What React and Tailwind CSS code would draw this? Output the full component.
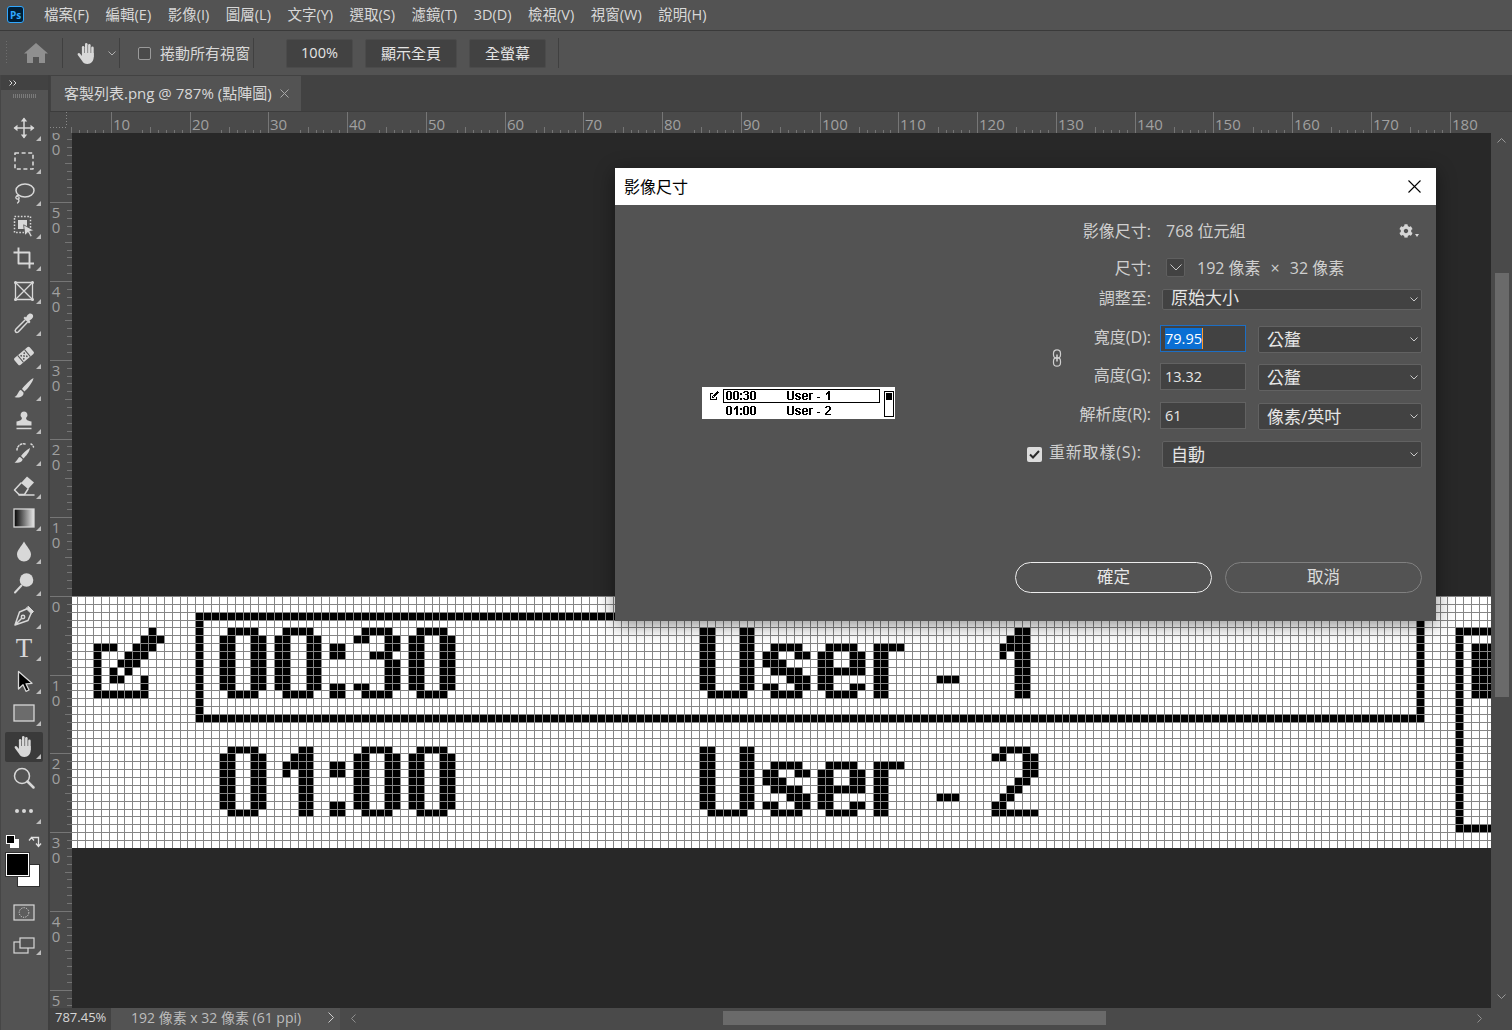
import React from "react";
import { FaCog } from "react-icons/fa";

const S = 7.8745;
const X0 = 30.0;

const ZERO = [".####.", "##..##", "##..##", "##..##", "##..##", "##..##", "##..##", "##..##", ".####."];
const THREE = [".####.", "##..##", "....##", "..###.", "....##", "....##", "....##", "##..##", ".####."];
const ONE = ["..##", ".###", "####", "#.##", "..##", "..##", "..##", "..##", "..##"];
const TWO = [".####.", "##..##", "....##", "....##", "...##.", "..##..", ".##...", "##....", "######"];
const COLON = ["..", "..", "##", "##", "..", "..", "..", "##", "##"];
const U = ["##...##", "##...##", "##...##", "##...##", "##...##", "##...##", "##...##", "##...##", ".#####."];
const LS = ["......", "......", ".####.", "##..##", "###...", ".####.", "...###", "##..##", ".####."];
const LE = ["......", "......", ".####.", "##..##", "##..##", "######", "##....", "##..##", ".####."];
const LR = ["....", "....", "####", "##..", "##..", "##..", "##..", "##..", "##.."];
const DASH = ["...", "...", "...", "...", "...", "...", "###", "...", "..."];
const CHECK = [
  ".......#..",
  "......###.",
  "###..###..",
  "#...###...",
  "#..###....",
  "#.#.#.....",
  "#.##..#...",
  "#.....#...",
  "#######...",
];

function buildPixels() {
  const out = [];
  const put = (glyph, col, row) =>
    glyph.forEach((line, r) => {
      let start = -1;
      for (let c = 0; c <= line.length; c++) {
        const on = line[c] === "#";
        if (on && start < 0) start = c;
        if (!on && start >= 0) {
          out.push({ c: col + start, r: row + r, w: c - start, h: 1 });
          start = -1;
        }
      }
    });
  put(CHECK, 8, 4);
  [[ZERO, 24], [ZERO, 31], [COLON, 38], [THREE, 41], [ZERO, 48]].forEach(([g, c]) => put(g, c, 4));
  [[ZERO, 24], [ONE, 32], [COLON, 38], [ZERO, 41], [ZERO, 48]].forEach(([g, c]) => put(g, c, 19));
  [4, 19].forEach((row) => {
    [[U, 85], [LS, 93], [LE, 100], [LR, 107], [DASH, 115]].forEach(([g, c]) => put(g, c, row));
  });
  put(ONE, 123, 4);
  put(TWO, 122, 19);
  out.push({ c: 21, r: 2, w: 156, h: 1 }, { c: 21, r: 15, w: 156, h: 1 }, { c: 21, r: 2, w: 1, h: 14 }, { c: 176, r: 2, w: 1, h: 14 });
  out.push({ c: 181, r: 4, w: 10, h: 1 }, { c: 181, r: 29, w: 10, h: 1 }, { c: 181, r: 4, w: 1, h: 26 }, { c: 190, r: 4, w: 1, h: 26 });
  out.push({ c: 183, r: 6, w: 6, h: 7 });
  return out;
}
const PIXELS = buildPixels();

function PixelCanvas() {
  const px = (c) => Math.round(X0 + c * S) - 72;
  const py = (r) => Math.round(r * S);
  const cols = Array.from({ length: 190 }, (_, i) => i);
  const rows = Array.from({ length: 33 }, (_, i) => i);
  return (
    <svg width="1419" height="252" shapeRendering="crispEdges" className="block bg-white">
      {PIXELS.map((p, i) => (
        <rect key={i} x={px(p.c)} y={py(p.r)} width={px(p.c + p.w) - px(p.c) + 1} height={py(p.r + p.h) - py(p.r) + 1} fill="#000" />
      ))}
      {cols.map((c) => (
        <rect key={c} x={px(c)} y="0" width="1" height="252" fill="#858585" />
      ))}
      {rows.map((r) => (
        <rect key={r} x="0" y={py(r)} width="1419" height="1" fill="#858585" />
      ))}
    </svg>
  );
}

function Thumb() {
  const sx = (c) => (c >= 120 ? c + 1 : c);
  return (
    <svg width="193" height="32" viewBox="0 0 193 32" shapeRendering="crispEdges" className="block bg-white">
      {PIXELS.map((p, i) => (
        <rect key={i} x={sx(p.c)} y={p.r} width={sx(p.c + p.w) - sx(p.c)} height={p.h} fill="#000" />
      ))}
    </svg>
  );
}

function TopRuler() {
  const o = 32.1 - 50;
  const majors = Array.from({ length: 18 }, (_, i) => (i + 1) * 10);
  const minors = [];
  for (let u = 5; u <= 184; u++) {
    if (u % 10 === 0) continue;
    const m = u % 10;
    if (m >= 1 && m <= (u >= 100 ? 4 : 3)) continue;
    minors.push(u);
  }
  return (
    <svg width="1441" height="21" className="block shrink-0">
      <path d="M16.5 0V15M0 15.5H16" stroke="#8a8a8a" strokeDasharray="1 2" shapeRendering="crispEdges" />
      {minors.map((u) => (
        <rect key={u} x={Math.round(o + u * S)} y={u % 5 === 0 ? 15 : 18} width="1" height={u % 5 === 0 ? 6 : 3} fill="#747474" shapeRendering="crispEdges" />
      ))}
      {majors.map((u) => (
        <g key={u}>
          <rect x={Math.round(o + u * S)} y="0" width="1" height="21" fill="#767676" shapeRendering="crispEdges" />
          <text x={Math.round(o + u * S) + 2} y="18" fontSize="15" fill="#a0a0a0">
            {u}
          </text>
        </g>
      ))}
    </svg>
  );
}

function LeftRuler() {
  const o = 463;
  const majors = [-6, -5, -4, -3, -2, -1, 0, 1, 2, 3, 4, 5];
  const units = Array.from({ length: 120 }, (_, i) => i - 60);
  return (
    <svg width="22" height="875" className="block shrink-0">
      {units.map((u) => (
        <rect key={u} x={u % 5 === 0 ? 15 : 17} y={Math.round(o + u * S)} width={u % 5 === 0 ? 7 : 5} height="1" fill="#747474" shapeRendering="crispEdges" />
      ))}
      {majors.map((k) => {
        const y = Math.round(o + k * 10 * S);
        const digits = String(Math.abs(k * 10)).split("");
        return (
          <g key={k}>
            <rect x="0" y={y} width="22" height="1" fill="#767676" shapeRendering="crispEdges" />
            {digits.map((d, i) => {
              const by = y + 16 + i * 15;
              if (by > 885) return null;
              return (
                <text key={i} x="6" y={by} fontSize="15" textAnchor="middle" fill="#a0a0a0">
                  {d}
                </text>
              );
            })}
          </g>
        );
      })}
    </svg>
  );
}

const C = "#d8d8d8";
const Ico = ({ children, size = 24 }) => (
  <svg width={size} height={size} viewBox="0 0 24 24" fill="none" stroke={C} strokeWidth="1.5" strokeLinecap="round" strokeLinejoin="round">
    {children}
  </svg>
);

const Hand = ({ size = 24, color = C }) => (
  <svg width={size} height={size} viewBox="0 0 24 24" fill={color}>
    <rect x="6.9" y="5" width="2.5" height="11" rx="1.25" />
    <rect x="10" y="2" width="2.5" height="13" rx="1.25" />
    <rect x="13.1" y="3" width="2.5" height="12" rx="1.25" />
    <rect x="16.2" y="5.5" width="2.5" height="11" rx="1.25" />
    <path d="M7 12h11.7v4c0 4-2.5 7-6.2 7-2.8 0-4.2-1.2-5.5-3.3L2.8 14c-.8-1.5 1.2-2.6 2.3-1.3L7 15z" />
  </svg>
);

const TOOLS = [
  <Ico><path d="M12 3v18M3 12h18" /><path d="M12 1.5l3.2 4H8.800zM12 22.500l3.200-4H8.800zM1.500 12l4-3.200v6.400zM22.500 12l-4-3.200v6.400z" fill={C} stroke="none" /></Ico>,
  <Ico><rect x="3" y="4" width="18" height="16" strokeDasharray="4 2.600" strokeLinecap="butt" strokeWidth="1.600" /></Ico>,
  <Ico><ellipse cx="13" cy="9.500" rx="9" ry="6.500" /><path d="M6.500 14.500c-3 .2-3.500 3-1.300 3.500 2.300.5 2.800-1.800.5-2.500M6.500 18c.8 1.500.5 3-1 4" strokeWidth="1.300" /></Ico>,
  <Ico><rect x="2.500" y="2.500" width="16" height="16" strokeDasharray="1.600 1.600" strokeLinecap="butt" /><rect x="6" y="6" width="9" height="9" fill={C} stroke="none" /><path d="M12 11l10 5.500-4.200 1 2.500 4.500-1.800 1-2.500-4.500-3 2.800z" fill={C} stroke="#535353" strokeWidth=".8" /></Ico>,
  <Ico><path d="M6.500 1.500V17.500H22M1.500 6.500h16v16" strokeWidth="1.900" strokeLinecap="butt" /></Ico>,
  <Ico><rect x="3.500" y="3.500" width="17" height="17" strokeWidth="1.300" /><path d="M3.500 3.500l17 17M20.500 3.500l-17 17" strokeWidth="1.300" /><g fill={C} stroke="none"><circle cx="3.500" cy="3.500" r="1.500" /><circle cx="20.500" cy="3.500" r="1.500" /><circle cx="3.500" cy="20.500" r="1.500" /><circle cx="20.500" cy="20.500" r="1.500" /></g></Ico>,
  <Ico><path d="M14 6.500l1.500-2.500c1.500-2 3.500-2 4.800-.8 1.300 1.300 1.200 3.200-.6 4.800l-2.200 1.500 1 1.500-1.500 1.500-5.500-5.500 1.500-1.500z" fill={C} stroke="none" /><path d="M13 9l-9 9c-2 2 0 4.500 2.200 3l9-9.500" /></Ico>,
  <Ico><g transform="rotate(-40 12 12)"><rect x="2" y="7.500" width="20" height="9" rx="1.500" fill={C} stroke="none" /><g fill="#535353" stroke="none"><rect x="7" y="7.500" width="1" height="9" /><rect x="16" y="7.500" width="1" height="9" /><circle cx="10" cy="10" r=".9" /><circle cx="14" cy="10" r=".9" /><circle cx="10" cy="14" r=".9" /><circle cx="14" cy="14" r=".9" /><circle cx="12" cy="12" r=".9" /></g></g></Ico>,
  <Ico><path d="M21.500 2c-3 1.500-9 7.500-11.500 11l2.500 2.500C15.500 13 21 6 21.500 2zM9 14c-3 .5-2.500 5-6.500 7 4 1.500 9.500 0 9-4.500z" fill={C} stroke="none" /></Ico>,
  <Ico><path d="M12 2.500a3.500 3.500 0 0 1 2.200 6.200c-.4 1.800 1 3 5.300 3.800v4h-15v-4c4.300-.8 5.700-2 5.300-3.800A3.500 3.500 0 0 1 12 2.500z" fill={C} stroke="none" /><path d="M4.500 19.500h15" strokeLinecap="butt" /></Ico>,
  <Ico><path d="M18 7C15 8.500 11 12 9 15l2.500 2.500C14 15 17.500 11 18 7zM8 16c-2.500.5-2 3.500-5.500 5.500 3.500 1 8.500-.5 8-3.500z" fill={C} stroke="none" /><path d="M5 9C5 5 9 2 13 3M19 3c1 .5 2 1.500 2.500 3" strokeDasharray="1.500 1.800" /></Ico>,
  <Ico><path d="M15 2.500l7 6-6 6.500-7-6z" fill={C} stroke="none" /><path d="M9 9l-6.500 7 4.500 4.500h5.500L16 15" /><path d="M7 21h15" /></Ico>,
  <svg width="22" height="20" viewBox="0 0 22 20"><defs><linearGradient id="grad" x1="0" x2="1" y1="0" y2="0"><stop offset="0" stopColor="#000" /><stop offset="1" stopColor="#e8e8e8" /></linearGradient></defs><rect x="1" y="1" width="20" height="18" fill="url(#grad)" stroke={C} strokeWidth="1.300" /></svg>,
  <Ico><path d="M12 2.500c2.500 5 7 8.500 7 13a7 7 0 0 1-14 0c0-4.500 4.500-8 7-13z" fill={C} stroke="none" /></Ico>,
  <Ico><circle cx="14.500" cy="9" r="6.800" fill={C} stroke="none" /><path d="M9.500 14.500l-6.500 7" strokeWidth="2" /></Ico>,
  <Ico><path d="M16.500 2.500l5 5-2.200 2.200-5-5z" fill={C} stroke={C} strokeWidth="1" /><path d="M14.500 5L7.500 8 3 21l13-4.500 3-7M3 21l6.500-6.500" /><circle cx="11" cy="13" r="1.700" /></Ico>,
  <span className="font-['Liberation_Serif',serif] text-[27px] leading-none text-[#d8d8d8]">T</span>,
  <Ico><path d="M6.500 2.500v17.500l4.500-4.200 3 6.500 3-1.300-3-6.200 6-.5z" fill="#000" stroke={C} strokeWidth="1.300" /></Ico>,
  <svg width="22" height="18" viewBox="0 0 22 18"><rect x="1" y="1" width="20" height="16" fill="#6c6c6c" stroke={C} strokeWidth="1.300" /></svg>,
  <Hand />,
  <Ico><circle cx="10" cy="10" r="7.500" /><path d="M15.500 15.500l6 6" strokeWidth="2.500" /></Ico>,
  <Ico><g fill={C} stroke="none"><circle cx="5" cy="12" r="2" /><circle cx="12" cy="12" r="2" /><circle cx="19" cy="12" r="2" /></g></Ico>,
];

const NO_CORNER = new Set([20]);

function ToolCell({ icon, index }) {
  return (
    <div className="relative flex h-[32.5px] w-full items-center justify-center pr-[1px]">
      {index === 19 && <div className="absolute left-[4px] top-[2px] h-[30px] w-[38px] rounded-[2px] bg-[#3a3a3a]" />}
      <div className="relative flex h-[24px] w-[24px] items-center justify-center">{icon}</div>
      {!NO_CORNER.has(index) && (
        <svg width="5" height="5" className="absolute left-[35px] top-[24px]">
          <path d="M5 0V5H0z" fill="#bdbdbd" />
        </svg>
      )}
    </div>
  );
}

function ToolPanel() {
  return (
    <div className="flex h-full w-[50px] shrink-0 flex-col border-r-2 border-r-[#3f3f3f] border-l border-l-[#464646] bg-[#535353]">
      <div className="flex h-[15px] items-center bg-[#424242] pl-[8px]">
        <svg width="8" height="6" viewBox="0 0 8 6" fill="none" stroke="#d8d8d8" strokeWidth="1">
          <path d="M0.500 0.500l2.500 2.500-2.500 2.500M4.500 0.500l2.500 2.500-2.500 2.500" />
        </svg>
      </div>
      <div className="flex h-[22px] justify-center pt-[4px]">
        <div className="h-[4px] w-[24px] bg-[repeating-linear-gradient(90deg,#7a7a7a_0,#7a7a7a_1px,transparent_1px,transparent_2px)]" />
      </div>
      {TOOLS.map((t, i) => (
        <ToolCell key={i} icon={t} index={i} />
      ))}
      <div className="flex h-[17px] items-start gap-[9px] pl-[5px] pt-[8px]">
        <svg width="13" height="13" viewBox="0 0 13 13">
          <rect x="4" y="4" width="9" height="9" fill="#fff" />
          <rect x=".5" y=".5" width="8" height="8" fill="#000" stroke="#fff" />
        </svg>
        <svg width="14" height="14" viewBox="0 0 14 14" fill="none" stroke="#e0e0e0" strokeWidth="1.300">
          <path d="M1 5.500l2.500-3 2.500 3M3.500 3V2.500h7v8M8 8.500l2.500 3 2.500-3" />
        </svg>
      </div>
      <div className="relative mt-[2px] h-[44px] w-full">
        <div className="absolute left-[16px] top-[18px] h-[23px] w-[23px] border border-[#2f2f2f] bg-white" />
        <div className="absolute left-[5px] top-[7px] h-[23px] w-[23px] border border-white bg-black outline outline-[#333]" />
      </div>
      <div className="mt-[14px] flex justify-center pr-[1px]">
        <svg width="22" height="17" viewBox="0 0 22 17" fill="none">
          <rect x="1" y="1" width="20" height="15" stroke={C} fill="#5d5d5d" strokeWidth="1.200" />
          <circle cx="11" cy="8.500" r="4.800" stroke={C} strokeDasharray="1.200 1.200" />
        </svg>
      </div>
      <div className="relative mt-[16px] flex justify-center pr-[1px]">
        <svg width="22" height="17" viewBox="0 0 22 17" fill="none" stroke={C} strokeWidth="1.200">
          <rect x="1" y="5" width="14" height="11" />
          <rect x="7" y="1" width="14" height="10" fill="#535353" />
        </svg>
        <svg width="5" height="5" className="absolute left-[35px] top-[13px]">
          <path d="M5 0V5H0z" fill="#bdbdbd" />
        </svg>
      </div>
    </div>
  );
}

const Chevron = ({ color = "#c8c8c8" }) => (
  <svg width="8" height="5" viewBox="0 0 8 5" fill="none" stroke={color} strokeWidth="1">
    <path d="M.5 .5L4 4 7.500 .5" />
  </svg>
);

const Sep = ({ className = "" }) => <div className={`h-[30px] w-px bg-[#404040] ${className}`} />;

const OptButton = ({ w, children, className = "" }) => (
  <div className={`flex h-[29px] items-center justify-center rounded-[2px] border border-[#4b4b4b] bg-[#424242] text-[#e4e4e4] ${w} ${className}`}>{children}</div>
);

function MenuBar() {
  const items = ["檔案(F)", "編輯(E)", "影像(I)", "圖層(L)", "文字(Y)", "選取(S)", "濾鏡(T)", "3D(D)", "檢視(V)", "視窗(W)", "說明(H)"];
  return (
    <div className="flex h-[31px] shrink-0 items-center border-b border-b-[#3a3a3a] bg-[#535353] pb-[1px] pl-[7px]">
      <div className="flex h-[17px] w-[17px] items-center justify-center rounded-[3px] border border-[#31a8ff] bg-[#001e36] text-[10px] font-bold leading-none text-[#31a8ff]">Ps</div>
      <div className="ml-[20px] flex gap-[16.500px] text-[14.500px] text-[#d8d8d8]">
        {items.map((m) => (
          <span key={m}>{m}</span>
        ))}
      </div>
    </div>
  );
}

function OptionsBar() {
  return (
    <div className="flex h-[44px] shrink-0 items-center bg-[#535353] text-[15px]">
      <div className="ml-[6px] h-[24px] w-px bg-[repeating-linear-gradient(180deg,#6d6d6d_0,#6d6d6d_1px,transparent_1px,transparent_3px)]" />
      <svg width="24" height="20" viewBox="0 0 24 20" className="ml-[17px]">
        <path d="M12 0L24 10.500h-3V20h-6v-6H9v6H3v-9.500H0z" fill="#8f8f8f" />
      </svg>
      <Sep className="ml-[14px]" />
      <div className="ml-[12px]">
        <Hand />
      </div>
      <div className="ml-[9px]">
        <Chevron color="#b0b0b0" />
      </div>
      <Sep className="ml-[3px]" />
      <div className="ml-[18px] h-[13px] w-[13px] rounded-[2px] border border-[#9a9a9a] bg-[#4a4a4a]" />
      <span className="ml-[9px] w-[90px] whitespace-nowrap text-[#d8d8d8]">捲動所有視窗</span>
      <Sep className="ml-[3px]" />
      <OptButton w="w-[67px]" className="ml-[32px] text-[14.500px]">100%</OptButton>
      <OptButton w="w-[92px]" className="ml-[12px]">顯示全頁</OptButton>
      <OptButton w="w-[77px]" className="ml-[12px]">全螢幕</OptButton>
      <Sep className="ml-[12px]" />
    </div>
  );
}

function Select({ text, w = "w-[164px]", h = "h-[27px]", className = "", textClass = "" }) {
  return (
    <div className={`flex items-center justify-between rounded-[2px] border border-[#626262] bg-[#424242] pl-[8px] pr-[3px] text-[17px] text-[#e6e6e6] ${w} ${h} ${className}`}>
      <span className={`leading-none ${textClass}`}>{text}</span>
      <Chevron />
    </div>
  );
}

function Field({ children, focused }) {
  return (
    <div className={`flex h-[27px] w-[86px] items-center border bg-[#424242] pl-[4px] text-[14.500px] text-[#e6e6e6] ${focused ? "border-[#1c6ec4]" : "border-[#626262]"}`}>
      {children}
    </div>
  );
}

const Lab = ({ children, cls = "w-[131px]" }) => <div className={`whitespace-nowrap text-right text-[16px] text-[#cfcfcf] ${cls}`}>{children}</div>;

function FieldRow({ label, value, unit, focused, className }) {
  return (
    <div className={`flex h-[27px] items-start ${className}`}>
      <Lab>{label}</Lab>
      <div className="ml-[9px]">
        <Field focused={focused}>
          {focused ? (
            <span className="border-r border-r-[#ff9a2e] bg-[#0a6fd4] text-white">{value}</span>
          ) : (
            value
          )}
        </Field>
      </div>
      <Select text={unit} className="ml-[12px] mt-[1px]" />
    </div>
  );
}

function Dialog() {
  return (
    <div className="absolute left-[615px] top-[168px] flex h-[453px] w-[821px] flex-col bg-[#535353] shadow-[0_4px_18px_rgba(0,0,0,0.45)]">
      <div className="flex h-[37px] shrink-0 items-center justify-between bg-white pl-[9px] pr-[15px]">
        <span className="pt-[1px] text-[16px] text-black">影像尺寸</span>
        <svg width="13" height="13" viewBox="0 0 13 13" stroke="#000" strokeWidth="1.100">
          <path d="M.5 .5l12 12M12.500 .5l-12 12" />
        </svg>
      </div>
      <div className="flex flex-1">
        <div className="w-[405px] pl-[87px] pt-[182px]">
          <Thumb />
        </div>
        <div className="relative w-[416px] pr-[14px] pt-[16px]">
          <div className="flex h-[20px] items-center">
            <Lab>影像尺寸:</Lab>
            <span className="ml-[15px] text-[16px] text-[#cfcfcf]">768 位元組</span>
            <div className="ml-auto mr-[3px] flex items-end gap-[2px]">
              <FaCog className="text-[14px] text-[#d6d6d6]" />
              <svg width="4" height="3" className="mb-[1px]">
                <path d="M0 0H4L2 3z" fill="#d6d6d6" />
              </svg>
            </div>
          </div>
          <div className="mt-[17px] flex h-[19px] items-center text-[16px] text-[#cfcfcf]">
            <Lab>尺寸:</Lab>
            <div className="ml-[15px] flex h-[19px] w-[19px] items-center justify-center rounded-[2px] border border-[#5f5f5f] bg-[#424242]">
              <svg width="12" height="7" viewBox="0 0 12 7" fill="none" stroke="#c8c8c8" strokeWidth="1">
                <path d="M.5 .5L6 6l5.500-5.500" />
              </svg>
            </div>
            <span className="ml-[12px] whitespace-nowrap">192 像素</span>
            <span className="ml-[10px] text-[16px]">×</span>
            <span className="ml-[10px] whitespace-nowrap">32 像素</span>
          </div>
          <div className="mt-[12px] flex h-[21px] items-center">
            <Lab cls="w-[131px] pb-[3px]">調整至:</Lab>
            <Select text="原始大小" w="w-[260px]" h="h-[21px]" className="ml-[11px]" textClass="pb-[4px]" />
          </div>
          <FieldRow label="寬度(D):" value="79.95" unit="公釐" focused className="mt-[15px]" />
          <FieldRow label="高度(G):" value="13.32" unit="公釐" className="mt-[11px]" />
          <FieldRow label="解析度(R):" value="61" unit="像素/英吋" className="mt-[12px]" />
          <div className="mt-[12px] flex h-[27px] items-center">
            <div className="ml-[7px] flex h-[15px] w-[15px] items-center justify-center rounded-[2px] bg-[#dcdcdc]">
              <svg width="11" height="9" viewBox="0 0 11 9" fill="none" stroke="#2b2b2b" strokeWidth="2">
                <path d="M1 4.500l3 3 6-6.500" />
              </svg>
            </div>
            <span className="mb-[6px] ml-[7px] w-[94px] whitespace-nowrap text-[16px] tracking-[0.8px] text-[#cfcfcf]">重新取樣(S):</span>
            <Select text="自動" w="w-[260px]" className="ml-[19px]" />
          </div>
          <svg width="10" height="18" viewBox="0 0 10 18" fill="none" stroke="#cfcfcf" strokeWidth="1.200" className="absolute left-[32px] top-[144px]">
            <rect x="1.500" y=".8" width="7" height="8.500" rx="3.500" />
            <rect x="1.500" y="8.700" width="7" height="8.500" rx="3.500" />
            <path d="M5 5.500v7" strokeWidth="1.600" />
          </svg>
        </div>
      </div>
      <div className="flex justify-end gap-[13px] pb-[28px] pr-[14px]">
        <div className="flex h-[31px] w-[197px] items-center justify-center rounded-full border border-[#ececec] text-[16.500px] text-[#e8e8e8]">確定</div>
        <div className="flex h-[31px] w-[197px] items-center justify-center rounded-full border border-[#808080] text-[16.500px] text-[#dcdcdc]">取消</div>
      </div>
    </div>
  );
}

function Tabs() {
  return (
    <div className="flex h-[37px] shrink-0 items-end border-b border-b-[#3c3c3c] bg-[#424242] pl-[1px]">
      <div className="flex h-[35px] w-[250px] items-center bg-[#535353] pl-[13px] text-[15px] text-[#d8d8d8]">
        <span className="w-[207px] whitespace-nowrap">客製列表.png @ 787% (點陣圖)</span>
        <svg width="9" height="9" viewBox="0 0 9 9" stroke="#a8a8a8" className="ml-[9px]">
          <path d="M.5 .5l8 8M8.500 .5l-8 8" />
        </svg>
      </div>
    </div>
  );
}

function VScroll() {
  return (
    <div className="flex h-full w-[21px] shrink-0 flex-col items-center bg-[#4a4a4a]">
      <div className="flex h-[140px] w-full shrink-0 justify-center pt-[5px]">
        <svg width="9" height="5" viewBox="0 0 9 5" fill="none" stroke="#9a9a9a">
          <path d="M.5 4.500L4.500 .5l4 4" />
        </svg>
      </div>
      <div className="h-[424px] w-[14px] shrink-0 bg-[#6a6a6a]" />
      <div className="flex flex-1 items-end pb-[9px]">
        <svg width="9" height="5" viewBox="0 0 9 5" fill="none" stroke="#9a9a9a">
          <path d="M.5 .5l4 4 4-4" />
        </svg>
      </div>
    </div>
  );
}

function StatusBar() {
  return (
    <div className="flex h-[22px] shrink-0 items-center text-[14px]">
      <div className="flex h-full w-[61px] items-center bg-[#424242] pb-[3px] pl-[5px] text-[13px] text-[#d6d6d6]">787.45%</div>
      <div className="flex h-full w-[229px] items-center bg-[#535353] pb-[3px] pl-[20px] text-[#bdbdbd]">
        <span className="w-[171px] whitespace-nowrap">192 像素 x 32 像素 (61 ppi)</span>
        <svg width="6" height="11" viewBox="0 0 6 11" fill="none" stroke="#cfcfcf" className="ml-[26px]">
          <path d="M.5 .5l5 5-5 5" />
        </svg>
      </div>
      <div className="flex h-full flex-1 items-center bg-[#4a4a4a] pb-[2px] pl-[11px] pr-[30px]">
        <svg width="5" height="9" viewBox="0 0 5 9" fill="none" stroke="#8f8f8f">
          <path d="M4.500 .5l-4 4 4 4" />
        </svg>
        <div className="ml-[367px] h-[14px] w-[383px] bg-[#6a6a6a]" />
        <svg width="5" height="9" viewBox="0 0 5 9" fill="none" stroke="#8f8f8f" className="ml-auto">
          <path d="M.5 .5l4 4-4 4" />
        </svg>
      </div>
    </div>
  );
}

export default function App() {
  return (
    <div className="relative flex h-[1030px] w-[1512px] flex-col overflow-hidden bg-[#535353] font-['Open_Sans','Noto_Sans_CJK_TC',sans-serif]">
      <MenuBar />
      <OptionsBar />
      <div className="flex min-h-0 flex-1">
        <ToolPanel />
        <div className="flex min-w-0 flex-1 flex-col">
          <Tabs />
          <div className="flex h-[21px] shrink-0 bg-[#4a4a4a]">
            <TopRuler />
            <div className="w-[21px] bg-[#4a4a4a]" />
          </div>
          <div className="flex min-h-0 flex-1">
            <div className="bg-[#4a4a4a]">
              <LeftRuler />
            </div>
            <div className="min-w-0 flex-1 bg-[#282828] pt-[463px]">
              <PixelCanvas />
            </div>
            <VScroll />
          </div>
          <StatusBar />
        </div>
      </div>
      <Dialog />
    </div>
  );
}
